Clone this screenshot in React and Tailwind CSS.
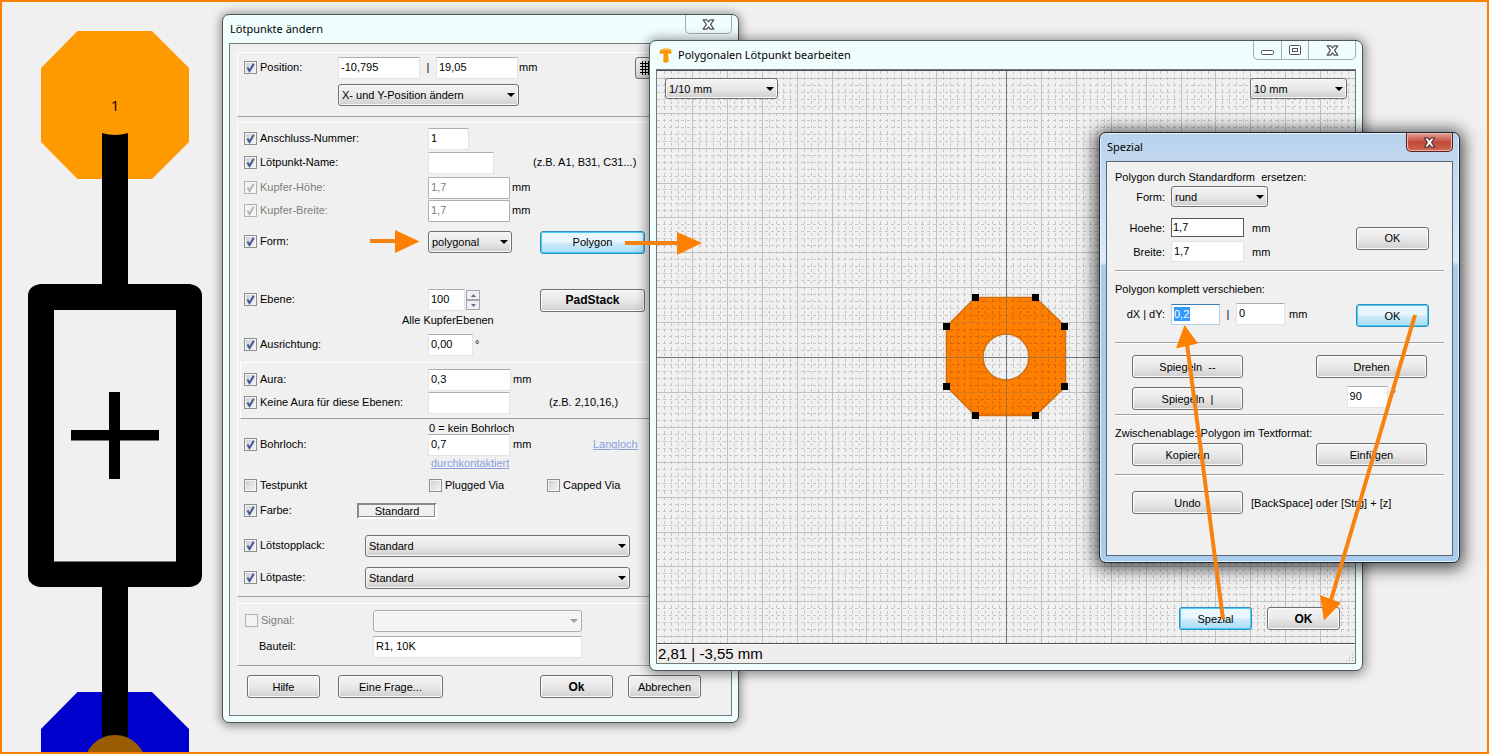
import React from "react";

const FACE = "bg-linear-to-b from-[#f4f4f4] from-0% via-[#e9e9e9] via-50% to-[#cfcfcf]";

function Tick({ disabled }) {
  return (
    <svg className="pointer-events-none col-start-1 row-start-1" width="13" height="13" viewBox="0 0 13 13" aria-hidden="true">
      <path d="M3.5 6.5 L5.5 10 L9.8 2.8" fill="none" strokeWidth="2" stroke={disabled ? "#b4b4b4" : "#44578f"} />
    </svg>
  );
}

function Check({ label, checked = false, disabled = false, className = "" }) {
  return (
    <label className={"flex items-center gap-[3px] pb-0.5 whitespace-nowrap " + (disabled ? "text-[#7d7d7d] " : "") + className}>
      <span className="grid">
        <input
          type="checkbox"
          defaultChecked={checked}
          disabled={disabled}
          className="col-start-1 row-start-1 size-[13px] appearance-none border border-[#8e8f8f] bg-linear-to-br from-[#c9cdd3] to-[#f6f6f6] shadow-[inset_0_0_0_1px_#f4f4f4] disabled:border-[#b1b1b1] disabled:from-[#f2f2f2]"
        />
        {checked && <Tick disabled={disabled} />}
      </span>
      {label}
    </label>
  );
}

function Note({ children, className = "" }) {
  return <span className={"pb-0.5 " + className}>{children}</span>;
}

function Field({ value = "", label, disabled = false, className = "" }) {
  return (
    <input
      type="text"
      aria-label={label}
      defaultValue={value}
      disabled={disabled}
      className={
        "h-[22px] shrink-0 rounded-[1px] border border-[#e2e3ea] border-t-[#abadb3] bg-white px-0.5 pb-0.5 outline-none disabled:border-[#afafaf] disabled:text-[#7d7d7d] " +
        className
      }
    />
  );
}

function Drop({ value, label, disabled = false, className = "" }) {
  return (
    <span className={"grid shrink-0 items-center " + className}>
      <select
        aria-label={label}
        disabled={disabled}
        className={
          "col-start-1 row-start-1 h-full w-full appearance-none rounded-[3px] border border-[#707070] px-[3px] shadow-[inset_0_0_0_1px_#f8f8f8] outline-none disabled:border-[#adadad] disabled:bg-none disabled:bg-[#f4f4f4] " +
          FACE
        }
      >
        <option>{value}</option>
      </select>
      <svg
        className={"pointer-events-none col-start-1 row-start-1 mr-1 justify-self-end " + (disabled ? "text-[#a0a0a0]" : "text-black")}
        width="8"
        height="4"
        viewBox="0 0 8 4"
        aria-hidden="true"
      >
        <path d="M0 0H8L4 4Z" fill="currentColor" />
      </svg>
    </span>
  );
}

function Push({ children, active = false, className = "" }) {
  return (
    <button
      type="button"
      className={
        "h-[23px] shrink-0 rounded-[3px] border " +
        (active
          ? "border-[#2f8fbf] bg-linear-to-b from-[#eaf6fd] from-45% via-[#cdeafa] via-55% to-[#a9dbf5] shadow-[inset_0_0_0_1px_#4ecbf5] "
          : "border-[#707070] shadow-[inset_0_0_0_1px_#fafafa] " + FACE + " ") +
        className
      }
    >
      {children}
    </button>
  );
}

function CloseGlyph({ stroke = "#4d525a" }) {
  return (
    <svg width="13" height="11" viewBox="0 0 13 11" aria-hidden="true">
      <path
        d="M1.2 .8H4.8L6.5 3L8.2 .8H11.8L8.6 5.4L11.8 10.2H8.2L6.5 7.8L4.8 10.2H1.2L4.4 5.4Z"
        fill="#fff"
        stroke={stroke}
        strokeWidth="1.2"
        strokeLinejoin="round"
      />
    </svg>
  );
}

function Window({ children, className }) {
  return (
    <section className={"absolute flex flex-col rounded-[7px] border px-1.5 pb-1.5 font-['Liberation_Sans',sans-serif] text-[11px] leading-[14px] text-black " + className}>
      {children}
    </section>
  );
}

const TITLE = "font-['Noto_Sans','Open_Sans',sans-serif] text-[11px] leading-4";

function Group({ children, className = "" }) {
  return <div className={"flex flex-col border-t border-b border-l border-t-white border-b-[#a0a0a0] border-l-white " + className}>{children}</div>;
}

function Row({ children, className = "" }) {
  return <div className={"flex h-[22px] items-center " + className}>{children}</div>;
}

function PadDialog() {
  return (
    <Window className="top-[14px] left-[222px] w-[517px] border-[#4f5656] bg-[#f1fefe] shadow-[0_1px_10px_2px_rgba(0,0,0,0.4)]">
      <header className="flex h-7 items-start justify-between">
        <h2 className={TITLE + " mt-1.5 ml-[1px]"}>Lötpunkte ändern</h2>
        <button type="button" aria-label="Schließen" className="flex h-[19px] w-[47px] items-center justify-center rounded-b-[5px] border border-t-0 border-[#a5adad]">
          <CloseGlyph />
        </button>
      </header>
      <div className="flex flex-col border border-[#707878] bg-[#f0f0f0] px-[7px] pt-2 pb-[17px]">
        <Group className="h-[65px] pt-1 pl-1.5">
          <Row>
            <Check label="Position:" checked className="w-[94px]" />
            <Field label="X" value="-10,795" className="w-[82px]" />
            <Note className="w-4 text-center">|</Note>
            <Field label="Y" value="19,05" className="w-[82px]" />
            <Note className="ml-px">mm</Note>
            <button type="button" aria-label="Raster" className={"ml-[98px] flex h-[22px] w-6 shrink-0 items-center rounded-[3px] border border-[#707070] px-1 " + FACE}>
              <svg width="14" height="14" viewBox="0 0 14 14" aria-hidden="true">
                <path d="M2.5 0V14M5.5 0V14M8.5 0V14M11.5 0V14M0 2.5H14M0 5.5H14M0 8.5H14M0 11.5H14" stroke="#000" fill="none" />
              </svg>
            </button>
          </Row>
          <Row className="mt-[5px] pl-[94px]">
            <Drop label="Positionsmodus" value="X- und Y-Position ändern" className="h-[22px] w-[181px]" />
          </Row>
        </Group>

        <Group className="mt-[5px] pt-[5px] pb-[7px] pl-1.5">
          <Row>
            <Check label="Anschluss-Nummer:" checked className="w-[184px]" />
            <Field label="Anschluss-Nummer" value="1" className="w-[41px]" />
          </Row>
          <Row className="mt-0.5">
            <Check label="Lötpunkt-Name:" checked className="w-[184px]" />
            <Field label="Lötpunkt-Name" className="w-[66px]" />
            <Note className="ml-[39px]">(z.B. A1, B31, C31...)</Note>
          </Row>
          <Row className="mt-[3px]">
            <Check label="Kupfer-Höhe:" checked disabled className="w-[184px]" />
            <Field label="Kupfer-Höhe" value="1,7" disabled className="w-[82px]" />
            <Note className="ml-0.5">mm</Note>
          </Row>
          <Row className="mt-px">
            <Check label="Kupfer-Breite:" checked disabled className="w-[184px]" />
            <Field label="Kupfer-Breite" value="1,7" disabled className="w-[82px]" />
            <Note className="ml-0.5">mm</Note>
          </Row>
          <Row className="mt-[9px]">
            <Check label="Form:" checked className="w-[184px]" />
            <Drop label="Form" value="polygonal" className="h-[22px] w-[84px]" />
            <Push active className="ml-7 w-[105px]">Polygon</Push>
          </Row>
          <Row className="mt-9">
            <Check label="Ebene:" checked className="w-[184px]" />
            <Field label="Ebene" value="100" className="w-[37px]" />
            <span className="ml-px flex w-[14px] flex-col bg-white">
              <button type="button" aria-label="Mehr" className="flex h-2.5 items-center justify-center border border-[#a5a5ab] bg-[#f0f0f0]">
                <svg width="5" height="3" viewBox="0 0 5 3" aria-hidden="true"><path d="M0 3L2.5 0L5 3Z" fill="#5a6c9c" /></svg>
              </button>
              <button type="button" aria-label="Weniger" className="flex h-2.5 items-center justify-center border border-[#a5a5ab] bg-[#f0f0f0]">
                <svg width="5" height="3" viewBox="0 0 5 3" aria-hidden="true"><path d="M0 0L2.5 3L5 0Z" fill="#5a6c9c" /></svg>
              </button>
            </span>
            <Push className="ml-[60px] w-[105px] text-[12px] font-bold">PadStack</Push>
          </Row>
          <p className="mt-0.5 pl-[158px]">Alle KupferEbenen</p>
          <Row className="mt-[7px]">
            <Check label="Ausrichtung:" checked className="w-[184px]" />
            <Field label="Ausrichtung" value="0,00" className="w-[45px]" />
            <Note className="ml-0.5">°</Note>
          </Row>
          <Group className="mt-1.5 -ml-1 h-[57px] pt-1.5 pl-[3px]">
            <Row>
              <Check label="Aura:" checked className="w-[184px]" />
              <Field label="Aura" value="0,3" className="w-[83px]" />
              <Note className="ml-0.5">mm</Note>
            </Row>
            <Row className="mt-px">
              <Check label="Keine Aura für diese Ebenen:" checked className="w-[184px]" />
              <Field label="Keine Aura für diese Ebenen" className="w-[82px]" />
              <Note className="ml-[39px]">(z.B. 2,10,16,)</Note>
            </Row>
          </Group>
          <p className="mt-0.5 pl-[185px]">0 = kein Bohrloch</p>
          <Row className="-mt-px">
            <Check label="Bohrloch:" checked className="w-[184px]" />
            <Field label="Bohrloch" value="0,7" className="w-[82px]" />
            <Note className="w-[83px] pl-[3px]">mm</Note>
            <Note>
              <a href="#langloch" className="text-[#8b9fdf] underline">Langloch</a>
            </Note>
          </Row>
          <p className="pl-[187px]">
            <a href="#durchkontaktiert" className="text-[#8b9fdf] underline">durchkontaktiert</a>
          </p>
          <Row className="mt-[5px]">
            <Check label="Testpunkt" className="w-[185px]" />
            <Check label="Plugged Via" className="w-[118px]" />
            <Check label="Capped Via" />
          </Row>
          <Row className="mt-[3px]">
            <Check label="Farbe:" checked className="w-[113px]" />
            <button type="button" className="h-4 w-20 border-2 border-t-[#8a8a8a] border-r-white border-b-white border-l-[#8a8a8a] bg-[#f0f0f0] leading-3 shadow-[inset_-1px_-1px_0_#8a8a8a]">Standard</button>
          </Row>
          <Row className="mt-[13px]">
            <Check label="Lötstopplack:" checked className="w-[121px]" />
            <Drop label="Lötstopplack" value="Standard" className="h-[22px] w-[265px]" />
          </Row>
          <Row className="mt-2.5">
            <Check label="Lötpaste:" checked className="w-[121px]" />
            <Drop label="Lötpaste" value="Standard" className="h-[22px] w-[265px]" />
          </Row>
        </Group>

        <Group className="mt-1.5 pt-1.5 pb-[7px] pl-[7px]">
          <Row>
            <Check label="Signal:" disabled className="w-32" />
            <Drop label="Signal" value="" disabled className="h-[22px] w-[209px]" />
          </Row>
          <Row className="mt-1">
            <label htmlFor="bauteil" className="w-32 pb-0.5 pl-3.5">Bauteil:</label>
            <input id="bauteil" type="text" defaultValue="R1, 10K" className="h-[22px] w-[209px] border border-[#e2e3ea] border-t-[#abadb3] bg-white px-0.5 pb-0.5 outline-none" />
          </Row>
        </Group>

        <div className="mt-[9px] flex pl-2.5">
          <Push className="w-[73px]">Hilfe</Push>
          <Push className="ml-[18px] w-[105px]">Eine Frage...</Push>
          <Push className="ml-[97px] w-[73px] text-[12px] font-bold">Ok</Push>
          <Push className="ml-[15px] w-[73px]">Abbrechen</Push>
        </div>
      </div>
    </Window>
  );
}

const STEP = 6.98;
const CX = 349;
const CY = 286;

function gridLines(center, from, to) {
  const lines = [];
  for (let k = from; k <= to; k++) {
    if (k !== 0) lines.push({ at: Math.round(center + k * STEP) + 0.5, major: k % 5 === 0 });
  }
  return lines;
}

const COLS = gridLines(CX, -49, 49);
const ROWS = gridLines(CY, -40, 40);
const HANDLES = [[318, 226], [378, 226], [407, 255], [407, 315], [378, 344], [318, 344], [289, 315], [289, 255]];
const OCTAGON = "M318.5 226.5H378.5L408.5 255.5V315.5L378.5 344.5H318.5L289.5 315.5V255.5Z";
const PAD = OCTAGON + "M326 286A23 23 0 0 0 372 286A23 23 0 0 0 326 286Z";

function Grid({ major, minor, clip }) {
  const paint = (l) => (l.major ? { stroke: major } : { stroke: minor, strokeDasharray: "3 3" });
  return (
    <g shapeRendering="crispEdges" clipPath={clip}>
      {COLS.map((l) => <line key={"c" + l.at} x1={l.at} x2={l.at} y1="0" y2="573" {...paint(l)} />)}
      {ROWS.map((l) => <line key={"r" + l.at} x1="0" x2="698" y1={l.at} y2={l.at} {...paint(l)} />)}
    </g>
  );
}

function PadCanvas() {
  return (
    <svg className="absolute inset-0 h-full w-full bg-[#f0f0f0]" aria-hidden="true">
      <clipPath id="pad">
        <path clipRule="evenodd" d={PAD} />
      </clipPath>
      <Grid major="#c0c0c0" minor="#c6c6c6" />
      <path fillRule="evenodd" d={PAD} fill="#ff8000" />
      <Grid major="#d9781c" minor="#dc6408" clip="url(#pad)" />
      <g fill="none" stroke="#d36f10" strokeWidth="1.5">
        <path d={OCTAGON} />
        <circle cx="349" cy="286" r="23" />
      </g>
      <g stroke="#747474" shapeRendering="crispEdges">
        <path d="M349.5 0V573M0 286.5H698" />
        <path d="M349.5 227V263M349.5 309V344M290 286.5H326M372 286.5H408" stroke="#b0702c" />
      </g>
      {HANDLES.map(([x, y]) => <rect key={x + "-" + y} x={x - 3} y={y - 3} width="7" height="7" fill="#000" />)}
    </svg>
  );
}

function EditorWindow() {
  return (
    <Window className="top-[40px] left-[649px] w-[714px] border-[#4f5656] bg-[#f1fefe] shadow-[0_1px_12px_2px_rgba(0,0,0,0.45)]">
      <header className="flex h-7 items-start justify-between">
        <h2 className={TITLE + " mt-1.5 ml-[3px] flex items-center gap-1.5"}>
          <svg width="13" height="15" viewBox="0 0 13 15" aria-hidden="true">
            <path d="M.8 2.2C3 .2 9.5 .2 12.2 1.6L12.5 5.4C11 6 9.8 5.6 9.2 5.6L9.7 13.4C8.2 15 5.3 15 4.2 13.8L4.6 5.8C3.2 5.4 2 6.4 .6 5.6Z" fill="#fb9a0c" />
            <path d="M1 2.6C3 1 9 1 12 2.2" fill="none" stroke="#ffc04a" />
          </svg>
          Polygonalen Lötpunkt bearbeiten
        </h2>
        <div className="flex h-[19px] divide-x divide-[#a5adad] rounded-b-[5px] border border-t-0 border-[#a5adad]">
          <button type="button" aria-label="Minimieren" className="flex w-7 items-center justify-center pt-1">
            <svg width="13" height="5" viewBox="0 0 13 5" aria-hidden="true"><rect x=".5" y=".5" width="12" height="4" rx="1" fill="#fff" stroke="#4d525a" /></svg>
          </button>
          <button type="button" aria-label="Maximieren" className="flex w-[27px] items-center justify-center">
            <svg width="12" height="10" viewBox="0 0 12 10" aria-hidden="true">
              <rect x=".5" y=".5" width="11" height="9" rx="1" fill="#fff" stroke="#4d525a" />
              <rect x="3.5" y="3.5" width="5" height="3" fill="#fff" stroke="#4d525a" />
            </svg>
          </button>
          <button type="button" aria-label="Schließen" className="flex w-[46px] items-center justify-center">
            <CloseGlyph />
          </button>
        </div>
      </header>
      <div className="border border-[#707878] bg-[#f0eded]">
        <div className="relative flex min-h-[574px] flex-col justify-between border-t border-b border-[#505050] pt-[7px] pr-2 pb-[13px] pl-2">
          <PadCanvas />
          <div className="relative flex justify-between">
            <Drop label="Raster" value="1/10 mm" className="h-[21px] w-[113px]" />
            <Drop label="Ansicht" value="10 mm" className="h-[21px] w-[97px]" />
          </div>
          <div className="relative flex justify-end gap-[15px] pr-[7px]">
            <Push active className="w-[73px]">Spezial</Push>
            <Push className="w-[73px] text-[12px] font-bold">OK</Push>
          </div>
        </div>
        <footer className="flex h-[19px] items-center justify-between border-t border-white pl-px text-[15px] leading-[18px]">
          2,81 | -3,55 mm
          <svg className="self-end" width="10" height="10" viewBox="0 0 10 10" aria-hidden="true">
            <path d="M7 1h1v1h-1zM4 4h1v1h-1zM7 4h1v1h-1zM1 7h1v1h-1zM4 7h1v1h-1zM7 7h1v1h-1z" fill="#a8a8a8" />
          </svg>
        </footer>
      </div>
    </Window>
  );
}

const RULE = "border-t border-b border-t-[#a0a0a0] border-b-white";

function SpecialDialog() {
  return (
    <Window className="top-[132px] left-[1099px] w-[361px] border-[#1d2733] bg-[#b5d1ee] bg-linear-to-b from-[#b9d2ec] via-[#dceafa] via-30% to-[#a9ccec] to-31% shadow-[0_2px_16px_4px_rgba(0,0,0,0.65),inset_0_0_0_1px_#e6f1fb]">
      <header className="flex h-7 items-start justify-between">
        <h2 className={TITLE + " mt-1.5 ml-px"}>Spezial</h2>
        <button type="button" aria-label="Schließen" className="flex h-[19px] w-[47px] items-center justify-center rounded-b-[5px] border border-t-0 border-[#5c1f1f] bg-linear-to-b from-[#e0a398] from-0% via-[#c2483a] via-50% to-[#cf6a50] shadow-[inset_0_0_0_1px_#e9b5aa]">
          <CloseGlyph stroke="#5a3434" />
        </button>
      </header>
      <div className="flex min-h-[395px] flex-col border border-[#566878] bg-[#f0f0f0] px-2">
        <p className="mt-2 whitespace-pre">{"Polygon durch Standardform  ersetzen:"}</p>
        <div className="mt-0.5 flex items-center justify-between pr-[15px]">
          <div className="grid grid-cols-[50px_auto_auto] items-center justify-start gap-x-1.5">
            <span className="text-right">Form:</span>
            <Drop label="Form" value="rund" className="col-span-2 h-[21px] w-[97px]" />
            <label htmlFor="hoehe" className="mt-[11px] text-right">Hoehe:</label>
            <input id="hoehe" type="text" defaultValue="1,7" className="mt-[11px] h-[19px] w-[73px] border border-[#5a5a5a] bg-white px-px pb-px outline-none" />
            <span className="mt-[11px] pl-0.5">mm</span>
            <label htmlFor="breite" className="mt-1 text-right">Breite:</label>
            <input id="breite" type="text" defaultValue="1,7" className="mt-1 h-[21px] w-[73px] border border-[#e2e3ea] bg-white px-0.5 pb-px outline-none" />
            <span className="mt-1 pl-0.5">mm</span>
          </div>
          <Push className="mt-7 w-[73px]">OK</Push>
        </div>
        <div className={"mt-2 " + RULE} />
        <p className="mt-2.5">Polygon komplett verschieben:</p>
        <div className="mt-[7px] flex items-start justify-between pr-[15px]">
          <div className="flex items-center">
            <label htmlFor="dx" className="w-[50px] text-right">dX | dY:</label>
            <span className="ml-1.5 flex h-[21px] w-[49px] items-center border border-[#b5cfe7] border-t-[#3d7bad] bg-white px-0.5">
              <input id="dx" type="text" defaultValue="0,2" className="h-3.5 w-4 bg-[#3399ff] text-white outline-none" />
            </span>
            <span className="w-4 text-center">|</span>
            <Field label="dY" value="0" className="h-[21px] w-[49px]" />
            <span className="ml-1">mm</span>
          </div>
          <Push active className="mt-px w-[73px]">OK</Push>
        </div>
        <div className={"mt-[15px] " + RULE} />
        <div className="mt-[11px] flex justify-between pr-[17px] pl-[17px]">
          <Push className="w-[111px] whitespace-pre">{"Spiegeln  --"}</Push>
          <Push className="w-[111px]">Drehen</Push>
        </div>
        <div className="mt-2 flex items-start justify-between pr-12 pl-[17px]">
          <Push className="mt-px w-[111px] whitespace-pre">{"Spiegeln  |"}</Push>
          <div className="flex">
            <Field label="Winkel" value="90" className="h-[21px] w-[41px]" />
            <span className="ml-1">°</span>
          </div>
        </div>
        <div className={"mt-1 " + RULE} />
        <p className="mt-2.5">Zwischenablage: Polygon im Textformat:</p>
        <div className="mt-[3px] flex justify-between pr-[17px] pl-[17px]">
          <Push className="w-[111px]">Kopieren</Push>
          <Push className="w-[111px]">Einfügen</Push>
        </div>
        <div className={"mt-2 " + RULE} />
        <div className="mt-[15px] flex items-center gap-2 pl-[17px]">
          <Push className="w-[111px]">Undo</Push>
          <span>[BackSpace] oder [Strg] + [z]</span>
        </div>
      </div>
    </Window>
  );
}

function Resistor() {
  return (
    <svg className="absolute top-0 left-0 h-full w-[220px]" role="img" aria-label="Bauteil R1">
      <path d="M77.5 31H152L189 68V142L152 179H77.5L41 142V68Z" fill="#ff9900" />
      <path d="M77.5 692H152L189 729V760H41V729Z" fill="#0000cc" />
      <path d="M102 133Q115 137 128 133V290H102ZM102 580H128V760H102Z" />
      <path fillRule="evenodd" d="M40 284H190Q202 286 202 296V575Q202 585 190 587H40Q28 585 28 575V296Q28 286 40 284ZM54 310V561.5H176V310Z" />
      <path d="M109 392H120V479H109ZM71 430H159V440.5H71Z" />
      <circle cx="115" cy="766" r="31" fill="#995c00" />
      <text x="115" y="111" textAnchor="middle" className="font-['Open_Sans','Noto_Sans',sans-serif] text-[15px]">1</text>
    </svg>
  );
}

function Arrows() {
  return (
    <svg className="pointer-events-none absolute inset-0 h-full w-full" aria-hidden="true">
      <g fill="#ff8000" stroke="none">
        <path d="M395 230L419.5 241.5L395 253Z" />
        <path d="M677 232L702 243L677 255Z" />
        <path d="M1184.5 325L1198 343.5L1176 348.5Z" />
        <path d="M1324 620.5L1320 595L1341 603Z" />
      </g>
      <path d="M370 241H397M625 243H679M1223 619L1187 344M1415 315L1331 600" fill="none" stroke="#f7820f" strokeWidth="4" />
    </svg>
  );
}

export default function App() {
  return (
    <main className="relative h-screen overflow-hidden bg-[#f0f0f0]">
      <Resistor />
      <PadDialog />
      <EditorWindow />
      <SpecialDialog />
      <Arrows />
      <div className="pointer-events-none absolute inset-0 border-2 border-[#ff8000]" />
    </main>
  );
}
